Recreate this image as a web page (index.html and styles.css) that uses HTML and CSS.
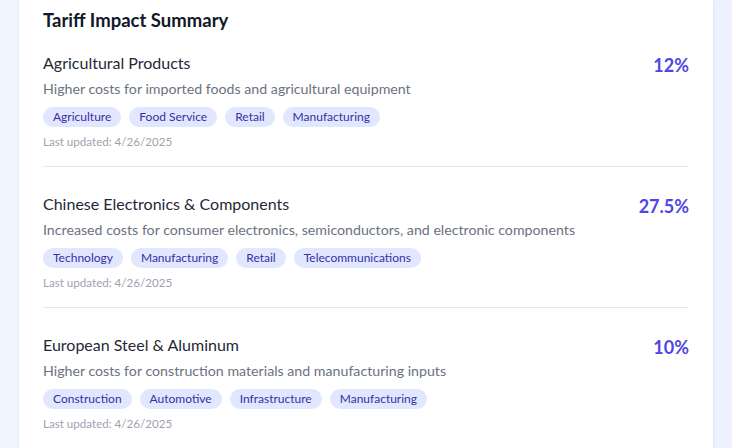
FILE: index.html
```html
<!DOCTYPE html>
<html>
<head>
<meta charset="utf-8">
<link rel="stylesheet" href="styles.css">
</head>
<body>
<div class="page">
  <section class="card">
    <h2 class="card-title">Tariff Impact Summary</h2>
    <div class="list">
      <div class="item">
        <div class="item-main">
          <h3 class="item-title">Agricultural Products</h3>
          <p class="item-desc">Higher costs for imported foods and agricultural equipment</p>
          <div class="tags">
            <span class="tag">Agriculture</span>
            <span class="tag">Food Service</span>
            <span class="tag">Retail</span>
            <span class="tag">Manufacturing</span>
          </div>
          <p class="updated">Last updated: 4/26/2025</p>
        </div>
        <div class="rate">12%</div>
      </div>
      <div class="item">
        <div class="item-main">
          <h3 class="item-title">Chinese Electronics &amp; Components</h3>
          <p class="item-desc">Increased costs for consumer electronics, semiconductors, and electronic components</p>
          <div class="tags">
            <span class="tag">Technology</span>
            <span class="tag">Manufacturing</span>
            <span class="tag">Retail</span>
            <span class="tag">Telecommunications</span>
          </div>
          <p class="updated">Last updated: 4/26/2025</p>
        </div>
        <div class="rate">27.5%</div>
      </div>
      <div class="item">
        <div class="item-main">
          <h3 class="item-title">European Steel &amp; Aluminum</h3>
          <p class="item-desc">Higher costs for construction materials and manufacturing inputs</p>
          <div class="tags">
            <span class="tag">Construction</span>
            <span class="tag">Automotive</span>
            <span class="tag">Infrastructure</span>
            <span class="tag">Manufacturing</span>
          </div>
          <p class="updated">Last updated: 4/26/2025</p>
        </div>
        <div class="rate">10%</div>
      </div>
    </div>
  </section>
</div>
</body>
</html>
```

FILE: styles.css
```css
* { box-sizing: border-box; }
html, body {
  margin: 0;
  padding: 0;
  height: 100%;
}
body {
  font-family: "Lato", "Noto Sans", sans-serif;
  background: linear-gradient(to right, #eff6ff, #eef2ff);
  overflow: hidden;
}
.page {
  padding: 0 19px;
  height: 100%;
}
.card {
  background: #ffffff;
  padding: 6px 24px 24px;
  height: 100%;
  box-shadow: 0 1px 3px rgba(0, 0, 0, 0.08), 0 1px 2px rgba(0, 0, 0, 0.04);
}
.card-title {
  margin: 0 0 17px;
  font-size: 18.5px;
  line-height: 28px;
  font-weight: 700;
  color: #111827;
}
.list {
  display: flex;
  flex-direction: column;
}
.item {
  display: flex;
  justify-content: space-between;
  align-items: flex-start;
  padding: 0 0 16px;
  border-bottom: 1px solid #e5e7eb;
}
.item + .item {
  padding-top: 25px;
}
.item-main {
  display: flex;
  flex-direction: column;
}
.item-title {
  margin: 0;
  font-size: 16px;
  line-height: 24px;
  font-weight: 400;
  color: #1f2937;
}
.item-desc {
  margin: 4px 0 0;
  font-size: 14.2px;
  line-height: 20px;
  color: #6b7280;
}
.tags {
  display: flex;
  gap: 8px;
  margin-top: 8px;
}
.tag {
  display: inline-flex;
  align-items: center;
  height: 20px;
  padding: 0 10px;
  border-radius: 9999px;
  background: #e0e7ff;
  color: #3730a3;
  font-size: 12px;
  line-height: 16px;
}
.updated {
  margin: 7px 0 0;
  font-size: 11.6px;
  line-height: 16px;
  color: #9ca3af;
}
.rate {
  font-size: 18px;
  line-height: 28px;
  font-weight: 700;
  color: #4f46e5;
}
```
